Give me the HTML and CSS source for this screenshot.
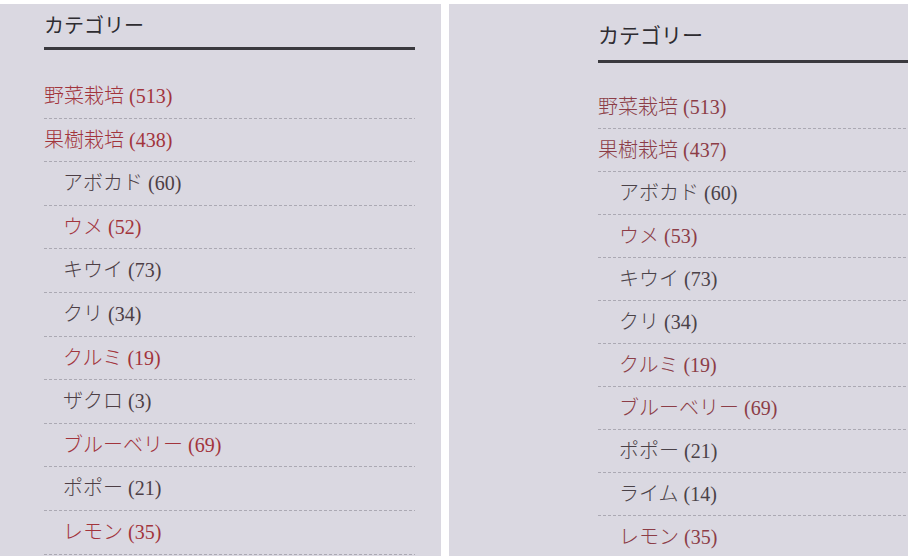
FILE: index.html
```html
<!DOCTYPE html>
<html lang="ja">
<head>
<meta charset="utf-8">
<title>カテゴリー</title>
<link rel="stylesheet" href="styles.css">
</head>
<body>
<div class="shots">
  <section class="panel panel-left">
    <h2 class="widget-title">カテゴリー</h2>
    <ul class="cats">
      <li class="cat"><a class="link">野菜栽培 (513)</a></li>
      <li class="cat"><a class="link">果樹栽培 (438)</a></li>
      <li class="cat sub"><a class="link visited">アボカド (60)</a></li>
      <li class="cat sub"><a class="link">ウメ (52)</a></li>
      <li class="cat sub"><a class="link visited">キウイ (73)</a></li>
      <li class="cat sub"><a class="link visited">クリ (34)</a></li>
      <li class="cat sub"><a class="link">クルミ (19)</a></li>
      <li class="cat sub"><a class="link visited">ザクロ (3)</a></li>
      <li class="cat sub"><a class="link">ブルーベリー (69)</a></li>
      <li class="cat sub"><a class="link visited">ポポー (21)</a></li>
      <li class="cat sub"><a class="link">レモン (35)</a></li>
    </ul>
  </section>
  <section class="panel panel-right">
    <h2 class="widget-title">カテゴリー</h2>
    <ul class="cats">
      <li class="cat first"><a class="link">野菜栽培 (513)</a></li>
      <li class="cat"><a class="link">果樹栽培 (437)</a></li>
      <li class="cat sub"><a class="link visited">アボカド (60)</a></li>
      <li class="cat sub"><a class="link">ウメ (53)</a></li>
      <li class="cat sub"><a class="link visited">キウイ (73)</a></li>
      <li class="cat sub"><a class="link visited">クリ (34)</a></li>
      <li class="cat sub"><a class="link">クルミ (19)</a></li>
      <li class="cat sub"><a class="link">ブルーベリー (69)</a></li>
      <li class="cat sub"><a class="link visited">ポポー (21)</a></li>
      <li class="cat sub"><a class="link visited">ライム (14)</a></li>
      <li class="cat sub"><a class="link">レモン (35)</a></li>
    </ul>
  </section>
</div>
</body>
</html>
```

FILE: styles.css
```css
html, body {
  margin: 0;
  padding: 0;
  background: #ffffff;
}

body {
  width: 908px;
  height: 556px;
  overflow: hidden;
  font-family: "Liberation Serif", "Noto Sans CJK JP", serif;
  font-weight: 300;
}

.shots {
  display: flex;
  gap: 8px;
  padding-top: 4px;
  height: 552px;
}

.panel {
  background: #dad8e1;
  height: 100%;
  box-sizing: border-box;
}

.panel-left {
  width: 441px;
  padding: 0 26px 0 44px;
}

.panel-right {
  flex: 1;
  padding: 0 0 0 149px;
  overflow: hidden;
}

.widget-title {
  margin: 0;
  font-weight: 400;
  color: #2e2c31;
  line-height: 30px;
  border-bottom: 3px solid #3a393e;
}

.panel-left .widget-title {
  font-size: 20px;
  padding: 7px 0 6px;
}

.panel-right .widget-title {
  font-size: 21px;
  padding: 17px 0 9px;
  width: 400px;
}

.cats {
  list-style: none;
  margin: 0;
  padding: 0;
}

.panel-left .cats {
  margin-top: 25px;
}

.panel-right .cats {
  margin-top: 23px;
  width: 400px;
}

.cat {
  font-size: 20px;
  line-height: 43.6px;
  background: repeating-linear-gradient(to right, #aba9b3 0 3px, transparent 3px 5px) left bottom / 100% 1px no-repeat;
}

.panel-right .cat {
  line-height: 43px;
}

.cat.sub {
  padding-left: 19px;
}

.panel-right .cat.sub {
  padding-left: 21px;
}

.link {
  color: #a2343c;
  text-decoration: none;
}

.link.visited {
  color: #4d3e45;
}

.panel-right .link {
  color: #8c3d47;
}

.panel-right .link.visited {
  color: #4a4248;
}
```
